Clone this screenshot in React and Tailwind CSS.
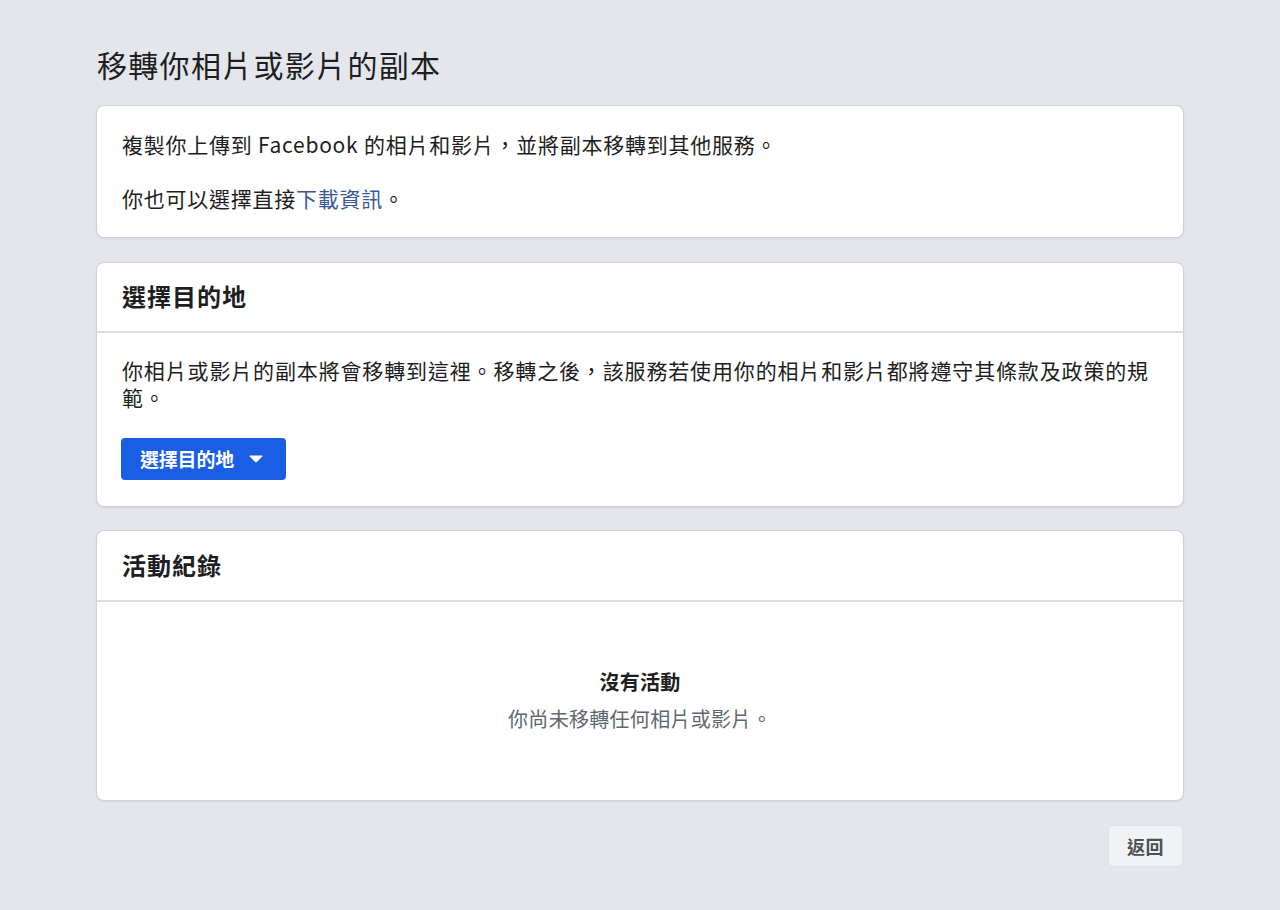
export default function App() {
  const font = { fontFamily: '"Noto Sans CJK TC", "Noto Sans", "Liberation Sans", sans-serif' };
  return (
    <div className="min-h-[910px] w-full bg-[#e4e6eb] text-[#1c1e21]" style={font}>
      <div className="mx-auto w-[1088px] pt-[44px] pb-[40px]">
        <h1 className="pl-[1px] text-[30px] leading-[40px] font-normal tracking-[1.3px] text-[#1c1e21]">
          移轉你相片或影片的副本
        </h1>

        <div className="mt-[21px] rounded-[8px] border border-[#cfd1d5] bg-white px-[25px] pt-[23px] pb-[24px] shadow-[0_1px_2px_rgba(0,0,0,0.08)]">
          <p className="text-[21px] leading-[30px] tracking-[0.75px]">
            複製你上傳到 Facebook 的相片和影片，並將副本移轉到其他服務。
          </p>
          <p className="mt-[24px] text-[21px] leading-[30px] tracking-[0.75px]">
            你也可以選擇直接<span className="text-[#385898]">下載資訊</span>。
          </p>
        </div>

        <div className="mt-[24px] rounded-[8px] border border-[#cfd1d5] bg-white shadow-[0_1px_2px_rgba(0,0,0,0.08)]">
          <div className="flex h-[70px] items-center px-[25px] pb-[2px] border-b-2 border-[#dadde1]">
            <h2 className="text-[24px] font-bold leading-[30px] tracking-[1px]">選擇目的地</h2>
          </div>
          <div className="px-[25px] pt-[24px] pb-[26px]">
            <p className="text-[21px] leading-[27px] tracking-[0.85px]">
              你相片或影片的副本將會移轉到這裡。移轉之後，該服務若使用你的相片和影片都將遵守其條款及政策的規範。
            </p>
            <button className="mt-[27px] ml-[-1px] flex h-[42px] w-[165px] items-center rounded-[4px] bg-[#1a5ee6] pl-[19px] text-white">
              <span className="text-[19px] font-bold leading-[24px] tracking-[-0.2px]">選擇目的地</span>
              <svg className="ml-[14px]" width="16" height="10" viewBox="0 0 16 10">
                <path d="M2 1.5 H14 Q15.2 1.5 14.3 2.5 L8.8 8 Q8 8.8 7.2 8 L1.7 2.5 Q0.8 1.5 2 1.5 Z" fill="white" />
              </svg>
            </button>
          </div>
        </div>

        <div className="mt-[23px] rounded-[8px] border border-[#cfd1d5] bg-white shadow-[0_1px_2px_rgba(0,0,0,0.08)]">
          <div className="flex h-[71px] items-center px-[25px] pb-[2px] border-b-2 border-[#dadde1]">
            <h2 className="text-[24px] font-bold leading-[30px] tracking-[1px]">活動紀錄</h2>
          </div>
          <div className="flex h-[198px] flex-col items-center pt-[66px]">
            <div className="text-[20px] font-bold leading-[28px] tracking-[0.3px]">沒有活動</div>
            <div className="mt-[9px] text-[20px] leading-[28px] tracking-[0.3px] text-[#606770]">
              你尚未移轉任何相片或影片。
            </div>
          </div>
        </div>

        <div className="mt-[24px] flex justify-end">
          <button className="mr-[1px] flex h-[42px] w-[75px] items-center justify-center rounded-[4px] border border-[#dddfe2] bg-[#f1f2f4] text-[18px] font-bold tracking-[0.5px] text-[#4b4f56]">
            返回
          </button>
        </div>
      </div>
    </div>
  );
}
